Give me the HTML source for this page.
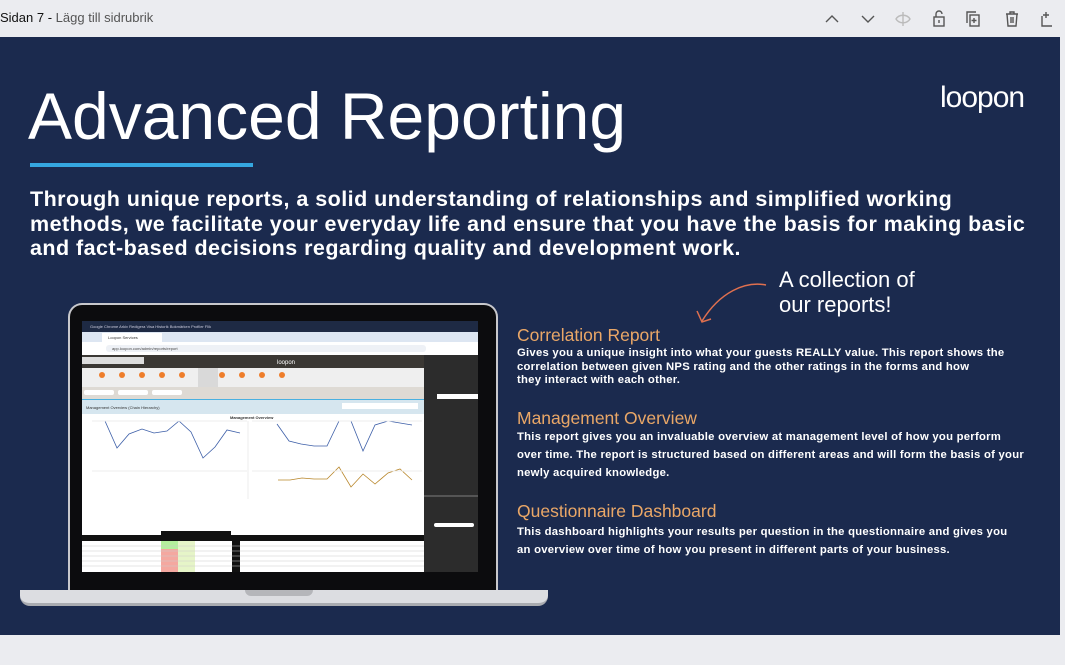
<!DOCTYPE html>
<html><head><meta charset="utf-8"><style>
*{margin:0;padding:0;box-sizing:border-box}
body{width:1065px;height:665px;background:#ebecf0;position:relative;overflow:hidden;font-family:"Liberation Sans",sans-serif}
.top{position:absolute;left:0;top:0;width:1065px;height:37px;background:#ebecf0}
.top .t{position:absolute;left:0;top:10px;font-size:13px;color:#222}
.top .t span{color:#555}
.slide{position:absolute;left:0;top:37px;width:1060px;height:598px;background:#1b2a4e;overflow:hidden}
.abs{position:absolute;white-space:nowrap;color:#fff}
h1{position:absolute;left:28px;top:41px;font-size:66px;font-weight:normal;color:#fff;white-space:nowrap}
.ul{position:absolute;left:30px;top:126px;width:223px;height:4px;background:#35a7e0}
.p{position:absolute;left:30px;top:150px;font-size:21.5px;line-height:24.5px;color:#fff;white-space:nowrap;font-weight:bold;letter-spacing:.45px}
.h{color:#eaa767;font-size:17.5px}
.b{font-size:11.3px;color:#fff;font-weight:bold;letter-spacing:.25px}
</style></head><body>
<div class="top"><div class="t"><b style="font-weight:normal;color:#111">Sidan 7 -</b> <span>Lägg till sidrubrik</span></div>
<svg style="position:absolute;left:820px;top:8px" width="240" height="22" fill="none" stroke="#555" stroke-width="1.4">
<path d="M6 14l6-6 6 6"/><path d="M42 8l6 6 6-6"/>
<path d="M76 11c3-5 11-5 14 0c-3 5-11 5-14 0z" stroke="#bbb"/><path d="M83 4v14" stroke="#bbb"/>
<rect x="114" y="9" width="10" height="9"/><path d="M116 9V6a3 3 0 0 1 6 0"/><path d="M119 12v3"/>
<rect x="150" y="7" width="9" height="11"/><path d="M147 15V4h9"/><path d="M154 10v5M151.5 12.5h5"/>
<path d="M186 6h12M190 6V4h4v2M187 6l1 12h8l1-12M191 9v6M193 9v6"/>
<path d="M222 8v10h10M226 4v6M223 7h6"/></svg>
</div>
<div class="slide">
<h1>Advanced Reporting</h1>
<div class="ul"></div>
<div class="p">Through unique reports, a solid understanding of relationships and simplified working<br>methods, we facilitate your everyday life and ensure that you have the basis for making basic<br>and fact-based decisions regarding quality and development work.</div>
<div class="abs" style="left:940px;top:44px;font-size:30px;letter-spacing:-1px">loopon</div>
<div class="abs" style="left:779px;top:230px;font-size:22px;line-height:25px">A collection of<br>our reports!</div>
<svg style="position:absolute;left:690px;top:240px" width="80" height="50" fill="none" stroke="#e0704f" stroke-width="1.5"><path d="M76 8C55 4 30 15 12 44"/><path d="M7 34l5 11 9-3"/></svg>

<div class="abs h" style="left:517px;top:288px">Correlation Report</div>
<div class="abs b" style="left:517px;top:310px;line-height:13.5px">Gives you a unique insight into what your guests REALLY value. This report shows the<br>correlation between given NPS rating and the other ratings in the forms and how<br>they interact with each other.</div>
<div class="abs h" style="left:517px;top:371px">Management Overview</div>
<div class="abs b" style="left:517px;top:391px;line-height:18px">This report gives you an invaluable overview at management level of how you perform<br>over time. The report is structured based on different areas and will form the basis of your<br>newly acquired knowledge.</div>
<div class="abs h" style="left:517px;top:464px">Questionnaire Dashboard</div>
<div class="abs b" style="left:517px;top:486px;line-height:18px">This dashboard highlights your results per question in the questionnaire and gives you<br>an overview over time of how you present in different parts of your business.</div>

<!-- laptop -->
<div style="position:absolute;left:68px;top:266px;width:430px;height:292px;background:#0c0c0e;border-radius:14px 14px 0 0;border:2px solid #c8c8cc;border-bottom:none"></div>
<div style="position:absolute;left:20px;top:553px;width:528px;height:16px;background:#dcdde1;border-radius:0 0 10px 10px;border-bottom:3px solid #a9abb0"></div>
<div style="position:absolute;left:245px;top:553px;width:68px;height:6px;background:#b5b6ba;border-radius:0 0 6px 6px"></div>
<svg style="position:absolute;left:82px;top:284px" width="396" height="251" font-family="Liberation Sans" font-size="4">
<rect width="396" height="251" fill="#fff"/>
<rect width="396" height="11" fill="#1e2a44"/>
<text x="8" y="7" fill="#ccd" font-size="4">Google Chrome   Arkiv   Redigera   Visa   Historik   Bokmärken   Profiler   Flik</text>
<rect y="11" width="396" height="10" fill="#dde6f2"/>
<rect x="20" y="12" width="60" height="9" fill="#fff"/>
<text x="26" y="18" fill="#333">Loopon Services</text>
<rect y="21" width="396" height="13" fill="#fff"/>
<rect x="24" y="24" width="320" height="7" rx="3" fill="#eef1f6"/>
<text x="30" y="29" fill="#444">app.loopon.com/admin/reports/report</text>
<rect y="34" width="396" height="13" fill="#3b3834"/>
<text x="195" y="43" fill="#fff" font-size="6">loopon</text>
<rect x="0" y="36" width="62" height="7" fill="#ddd"/>
<rect y="47" width="370" height="19" fill="#efefef"/>
<g fill="#ee7d2b"><circle cx="20" cy="54" r="3"/><circle cx="40" cy="54" r="3"/><circle cx="60" cy="54" r="3"/><circle cx="80" cy="54" r="3"/><circle cx="100" cy="54" r="3"/><circle cx="140" cy="54" r="3"/><circle cx="160" cy="54" r="3"/><circle cx="180" cy="54" r="3"/><circle cx="200" cy="54" r="3"/></g>
<rect x="116" y="47" width="20" height="19" fill="#d9d9d9"/>
<rect y="66" width="370" height="12" fill="#dedad4"/>
<rect x="2" y="69" width="30" height="5" rx="2" fill="#fff"/><rect x="36" y="69" width="30" height="5" rx="2" fill="#fff"/><rect x="70" y="69" width="30" height="5" rx="2" fill="#fff"/>
<rect x="0" y="78" width="342" height="15" fill="#d6e6ef"/>
<rect x="0" y="78" width="342" height="1" fill="#4ab0e0"/>
<text x="4" y="88" fill="#333">Management Overview (Chain Hierarchy)</text>
<rect x="260" y="82" width="76" height="6" fill="#fff"/>
<text x="148" y="98" fill="#333" font-weight="bold">Management Overview</text>
<polyline fill="none" stroke="#3d5fa8" stroke-width=".8" points="23,100 35,127 47,113 60,108 72,112 85,110 97,100 109,111 121,137 133,126 145,109 158,112"/>
<polyline fill="none" stroke="#3d5fa8" stroke-width=".8" points="195,103 207,120 219,123 232,125 245,125 257,100 269,100 281,130 293,104 306,100 318,102 330,104"/>
<polyline fill="none" stroke="#b8862a" stroke-width=".8" points="196,159 208,159 220,157 232,158 245,158 257,146 269,166 281,153 293,163 306,152 318,148 330,159"/>
<line x1="10" y1="100" x2="165" y2="100" stroke="#eee"/><line x1="10" y1="150" x2="165" y2="150" stroke="#eee"/>
<line x1="170" y1="100" x2="340" y2="100" stroke="#eee"/><line x1="170" y1="150" x2="340" y2="150" stroke="#eee"/>
<line x1="166" y1="100" x2="166" y2="178" stroke="#eee"/>
<rect x="0" y="214" width="342" height="6" fill="#111"/>
<rect x="79" y="210" width="70" height="10" fill="#111"/>
<rect x="150" y="220" width="8" height="31" fill="#111"/>
<rect x="79" y="220" width="17" height="31" fill="#f4a8a0"/><rect x="79" y="220" width="17" height="8" fill="#b4ef9c"/>
<rect x="96" y="220" width="17" height="31" fill="#e6f5c8"/>
<g stroke="#ccc" stroke-width=".5"><line x1="0" y1="225" x2="342" y2="225"/><line x1="0" y1="230" x2="342" y2="230"/><line x1="0" y1="235" x2="342" y2="235"/><line x1="0" y1="240" x2="342" y2="240"/><line x1="0" y1="245" x2="342" y2="245"/></g>
<rect x="342" y="34" width="54" height="217" fill="#2c2c2c"/>
<rect x="355" y="73" width="41" height="5" fill="#fff"/>
<rect x="342" y="174" width="54" height="2" fill="#555"/>
<rect x="352" y="202" width="40" height="4" rx="2" fill="#fff"/>
</svg>
</div>
</body></html>
